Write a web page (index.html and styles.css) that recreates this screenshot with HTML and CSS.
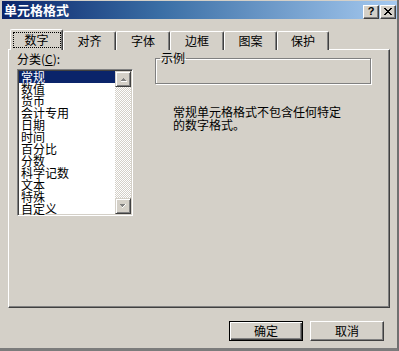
FILE: index.html
```html
<!DOCTYPE html>
<html lang="zh-CN">
<head>
<meta charset="UTF-8" />
<title>单元格格式</title>
<link rel="stylesheet" href="styles.css">
</head>
<body>
<div class="window">
  <div class="titlebar">
    <span class="title">单元格格式</span>
    <div class="ctrls">
      <div class="ctrl help">?</div>
      <div class="ctrl">
        <svg width="8" height="7" viewBox="0 0 8 7"><path d="M0 0h2v1h1v1h2v-1h1v-1h2v1h-1v1h-1v1h-1v1h1v1h1v1h1v1h-2v-1h-1v-1h-2v1h-1v1h-2v-1h1v-1h1v-1h1v-1h-1v-1h-1v-1h-1z" fill="#000"/></svg>
      </div>
    </div>
  </div>

  <div class="tabs">
    <div class="tab active"><span class="focus">数字</span></div>
    <div class="tab">对齐</div>
    <div class="tab wide">字体</div>
    <div class="tab wide">边框</div>
    <div class="tab">图案</div>
    <div class="tab narrow">保护</div>
  </div>

  <div class="panel">
    <div class="left">
      <div class="label">分类(<u>C</u>):</div>
      <div class="listbox">
        <div class="items">
          <div class="item selected">常规</div>
          <div class="item">数值</div>
          <div class="item">货币</div>
          <div class="item">会计专用</div>
          <div class="item">日期</div>
          <div class="item">时间</div>
          <div class="item">百分比</div>
          <div class="item">分数</div>
          <div class="item">科学记数</div>
          <div class="item">文本</div>
          <div class="item">特殊</div>
          <div class="item">自定义</div>
        </div>
        <div class="scrollbar">
          <div class="sbtn"><svg width="7" height="5" viewBox="0 0 7 5"><path d="M3 1h1v1h1v1h1v1h-5v-1h1v-1h1z" fill="#808080"/><path d="M1 4h6v1h-6z" fill="#fff"/></svg></div>
          <div class="track"></div>
          <div class="sbtn"><svg width="7" height="5" viewBox="0 0 7 5"><path d="M0 0h5v1h-1v1h-1v1h-1v-1h-1v-1h-1z" fill="#808080"/><path d="M5 0h1v1h-1v1h-1v1h-1v1h-1v-1h1v-1h1v-1h1z" fill="#fff"/></svg></div>
        </div>
      </div>
    </div>
    <div class="right">
      <fieldset class="sample">
        <legend>示例</legend>
        <div class="sample-body"></div>
      </fieldset>
      <p class="desc">常规单元格格式不包含任何特定<br>的数字格式。</p>
    </div>
  </div>

  <div class="actions">
    <div class="button default">确定</div>
    <div class="button">取消</div>
  </div>
</div>
</body>
</html>
```

FILE: styles.css
```css
body {
  margin: 0;
  font-family: "Noto Sans CJK SC", "Liberation Sans", sans-serif;
  font-size: 12px;
  color: #000;
}
.window {
  box-sizing: border-box;
  width: 399px;
  height: 351px;
  background: #d4d0c8;
  padding: 1px 0 0 2px;
  border-right: 2px solid #707070;
  border-bottom: 3px solid #7c7c7c;
  overflow: hidden;
}
.titlebar {
  height: 18px;
  display: flex;
  align-items: center;
  justify-content: space-between;
  padding: 0 1px 0 2px;
  background: linear-gradient(to right, #0a246a, #3a6ea5 40%, #a6caf0);
}
.title {
  color: #fff;
  font-weight: bold;
  font-size: 13px;
  line-height: 16px;
}
.ctrls {
  display: flex;
  gap: 1px;
  margin-top: 3px;
}
.ctrl {
  box-sizing: border-box;
  width: 16px;
  height: 14px;
  background: #d4d0c8;
  border-top: 1px solid #fff;
  border-left: 1px solid #fff;
  border-right: 1px solid #404040;
  border-bottom: 1px solid #404040;
  box-shadow: inset -1px -1px 0 #808080;
  display: flex;
  align-items: center;
  justify-content: center;
}
.help {
  font-family: "Liberation Sans", sans-serif;
  font-weight: bold;
  font-size: 11px;
  line-height: 11px;
}

.tabs {
  display: flex;
  align-items: flex-end;
  height: 21px;
  margin: 10px 0 -1px 8px;
  position: relative;
  z-index: 1;
}
.tab {
  box-sizing: border-box;
  width: 53px;
  height: 19px;
  border-top: 1px solid #fff;
  border-left: 1px solid #fff;
  border-right: 1px solid #404040;
  border-radius: 2px 2px 0 0;
  box-shadow: inset -1px 0 0 #808080;
  text-align: center;
  line-height: 17px;
  background: #d4d0c8;
}
.tab.wide {
  width: 54px;
}
.tab.narrow {
  width: 52px;
}
.tab.active {
  height: 21px;
  line-height: 19px;
}
.focus {
  display: inline-block;
  outline: 1px dotted #000;
  width: 46px;
  line-height: 14px;
}

.panel {
  box-sizing: border-box;
  height: 259px;
  margin: 0 7px 0 6px;
  border-top: 1px solid #fff;
  border-left: 1px solid #fff;
  border-right: 1px solid #404040;
  border-bottom: 1px solid #404040;
  box-shadow: inset -1px -1px 0 #808080;
  padding: 1px 0 0 8px;
  display: flex;
  gap: 22px;
}
.left {
  width: 116px;
}
.label {
  line-height: 15px;
  margin-bottom: 3px;
}
.listbox {
  box-sizing: border-box;
  width: 116px;
  height: 147px;
  border-top: 1px solid #808080;
  border-left: 1px solid #808080;
  border-right: 1px solid #fff;
  border-bottom: 1px solid #fff;
  box-shadow: inset 1px 1px 0 #404040, inset -1px -1px 0 #d4d0c8;
  padding: 1px 1px 0;
  background: #fff;
  display: flex;
}
.items {
  flex: 1;
  overflow: hidden;
}
.item {
  height: 12px;
  line-height: 12px;
  padding-left: 2px;
}
.item.selected {
  background: #0a246a;
  color: #fff;
}
.scrollbar {
  width: 16px;
  display: flex;
  flex-direction: column;
  margin-bottom: 1px;
}
.sbtn {
  box-sizing: border-box;
  height: 16px;
  background: #d4d0c8;
  border-top: 1px solid #d4d0c8;
  border-left: 1px solid #d4d0c8;
  border-right: 1px solid #404040;
  border-bottom: 1px solid #404040;
  box-shadow: inset 1px 1px 0 #fff, inset -1px -1px 0 #808080;
  display: flex;
  align-items: center;
  justify-content: center;
}
.track {
  flex: 1;
  background: repeating-conic-gradient(#d4d0c8 0 25%, #fff 0 50%) 0 0 / 2px 2px;
}

.right {
  width: 216px;
  padding-top: 1px;
}
.sample {
  margin: 0;
  padding: 0;
  border: 1px solid #808080;
  box-shadow: 1px 1px 0 #fff, inset 1px 1px 0 #fff;
}
.sample legend {
  padding: 0 1px;
  margin-left: 4px;
  line-height: 12px;
}
.sample-body {
  height: 19px;
}
.desc {
  margin: 21px 0 0 18px;
  line-height: 13px;
}

.actions {
  display: flex;
  justify-content: flex-end;
  gap: 7px;
  margin: 13px 13px 0 0;
}
.button {
  box-sizing: border-box;
  width: 74px;
  height: 20px;
  border-top: 1px solid #fff;
  border-left: 1px solid #fff;
  border-right: 1px solid #404040;
  border-bottom: 1px solid #404040;
  box-shadow: inset -1px -1px 0 #808080;
  text-align: center;
  line-height: 18px;
}
.button.default {
  border: 1px solid #000;
  box-shadow: inset 1px 1px 0 #fff, inset -1px -1px 0 #404040, inset -2px -2px 0 #808080;
}
```
